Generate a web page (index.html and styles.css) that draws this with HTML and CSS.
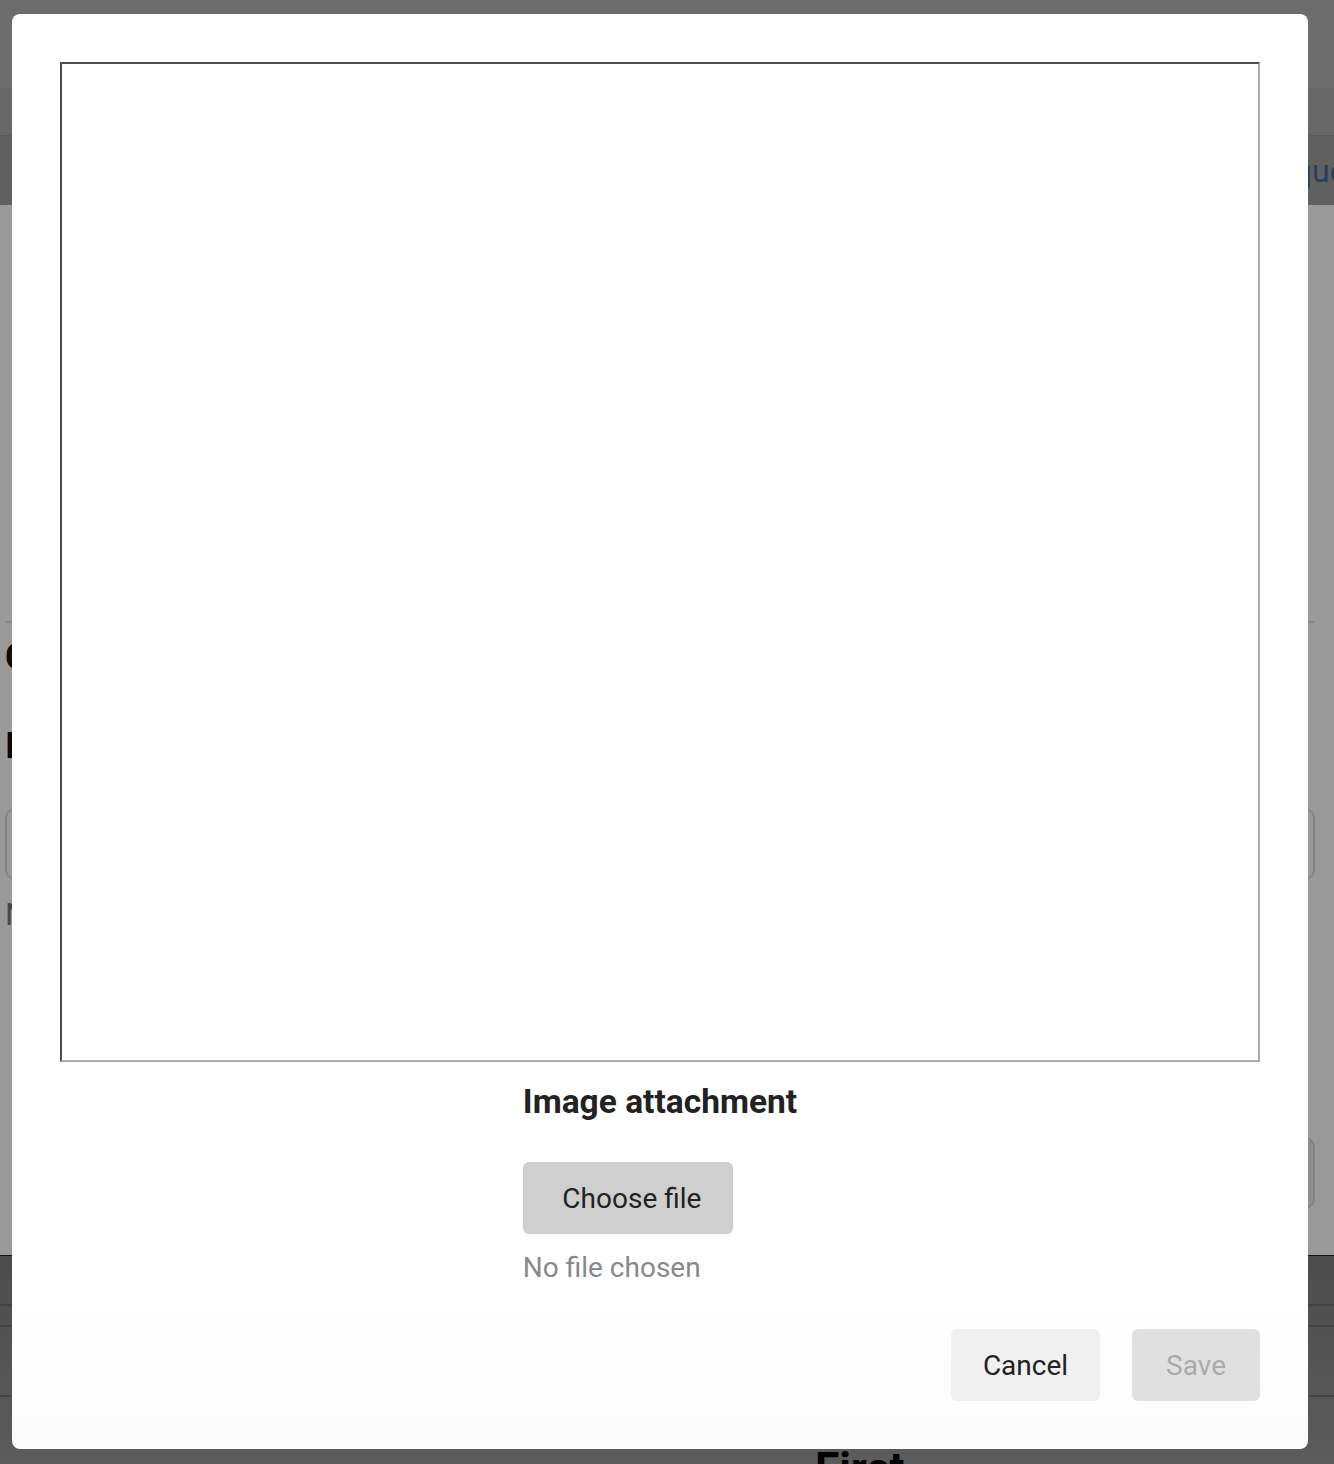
FILE: index.html
```html
<!DOCTYPE html>
<html lang="en">
<head>
  <meta charset="UTF-8" />
  <meta name="viewport" content="width=device-width, initial-scale=1.0" />
  <title>Image attachment</title>
  <link rel="stylesheet" href="styles.css">
</head>
<body>

  <div class="page">
    <header class="topbar"></header>
    <nav class="tabs"></nav>
    <div class="subbar">
      <a class="subbar-link">Request</a>
    </div>

    <main class="content">
      <div class="intro"></div>
      <hr class="divider" />
      <h2 class="section-title">Create request</h2>
      <label class="field-label">Image</label>
      <div class="field-input"></div>
      <p class="field-hint">No file chosen</p>
      <div class="side-row">
        <div class="side-input"></div>
      </div>
    </main>

    <section class="list">
      <div class="list-row"></div>
      <div class="list-row short"></div>
      <div class="list-row tall"></div>
      <h3 class="list-title">First</h3>
    </section>
  </div>

  <div class="overlay"></div>

  <div class="modal">
    <div class="preview"></div>

    <div class="attach">
      <div class="attach-field">
        <h3 class="attach-title">Image attachment</h3>
        <label class="file-button">Choose file</label>
        <p class="file-name">No file chosen</p>
      </div>
    </div>

    <div class="actions">
      <button class="btn btn-cancel">Cancel</button>
      <button class="btn btn-save" disabled>Save</button>
    </div>
  </div>

</body>
</html>
```

FILE: styles.css
```css
html, body {
  margin: 0;
  height: 100%;
  overflow: hidden;
}

body {
  font-family: Roboto, "Noto Sans", sans-serif;
  color: #222;
  background: #fff;
}

/* background page */

.page {
  width: 1334px;
}

.topbar {
  height: 88px;
  background: #b6b6b6;
}

.tabs {
  height: 47px;
  background: #aaa;
  border-bottom: 1px solid #969696;
}

.subbar {
  height: 69px;
  background: #a0a0a0;
  white-space: nowrap;
  overflow: hidden;
}

.subbar-link {
  display: inline-block;
  margin-left: 1257px;
  margin-top: 16px;
  font-size: 32px;
  color: #3f6c9f;
}

.content {
  height: 1050px;
  padding: 0 19px 0 5px;
  box-sizing: border-box;
}

.intro {
  height: 416px;
}

.divider {
  margin: 0;
  border: none;
  border-top: 2px solid #e3e3e3;
}

.section-title {
  margin: 13px 0 0;
  font-size: 36px;
  font-weight: 700;
  color: #111;
}

.field-label {
  display: block;
  margin-top: 47px;
  font-size: 36px;
  font-weight: 700;
  color: #111;
}

.field-input {
  margin-top: 41px;
  height: 72px;
  border: 2px solid #ddd;
  border-radius: 10px;
  box-sizing: border-box;
}

.field-hint {
  margin: 15px 0 0;
  font-size: 32px;
  color: #777;
}

.side-row {
  display: flex;
  justify-content: flex-end;
  margin-top: 204px;
}

.side-input {
  width: 320px;
  height: 72px;
  border: 2px solid #ddd;
  border-radius: 10px;
  box-sizing: border-box;
  background: #eee;
}

.list {
  height: 209px;
  background: linear-gradient(to bottom, #7f7f7f, #999);
  border-top: 1px solid #222;
}

.list-row {
  height: 48px;
  border-bottom: 2px solid #707070;
}

.list-row.short {
  height: 19px;
}

.list-row.tall {
  height: 68px;
}

.list-title {
  margin: 46px 0 0 815px;
  font-size: 44px;
  font-weight: 700;
  color: #000;
}

.overlay {
  position: fixed;
  inset: 0;
  background: rgba(0, 0, 0, 0.4);
}

/* modal */

.modal {
  position: fixed;
  top: 14px;
  left: 12px;
  width: 1296px;
  box-sizing: border-box;
  padding: 48px;
  background: linear-gradient(to bottom, #fff 90%, #fbfbfb);
  border-radius: 8px;
}

.preview {
  height: 1000px;
  box-sizing: border-box;
  border: 2px solid;
  border-color: #4d4d4d #acacac #acacac #4d4d4d;
  background: #fff;
}

.attach {
  display: flex;
  justify-content: center;
  margin-top: 20px;
}

.attach-field {
  display: flex;
  flex-direction: column;
  align-items: flex-start;
}

.attach-title {
  margin: 0;
  font-size: 33.5px;
  font-weight: 700;
  color: #222;
}

.file-button {
  margin-top: 41px;
  width: 210px;
  height: 72px;
  box-sizing: border-box;
  padding-left: 8px;
  display: flex;
  align-items: center;
  justify-content: center;
  background: #cfcfcf;
  border-radius: 6px;
  font-size: 28px;
  color: #222;
}

.file-name {
  margin: 17px 0 0;
  font-size: 28px;
  color: #888;
}

.actions {
  display: flex;
  justify-content: flex-end;
  gap: 32px;
  margin-top: 45px;
}

.btn {
  height: 72px;
  padding: 0 32px;
  border: none;
  border-radius: 6px;
  font-family: Roboto, "Noto Sans", sans-serif;
  font-size: 28px;
}

.btn-cancel {
  background: #f0f0f0;
  color: #222;
}

.btn-save {
  padding: 0 34px;
  background: #e0e0e0;
  color: #aaa;
}
```
